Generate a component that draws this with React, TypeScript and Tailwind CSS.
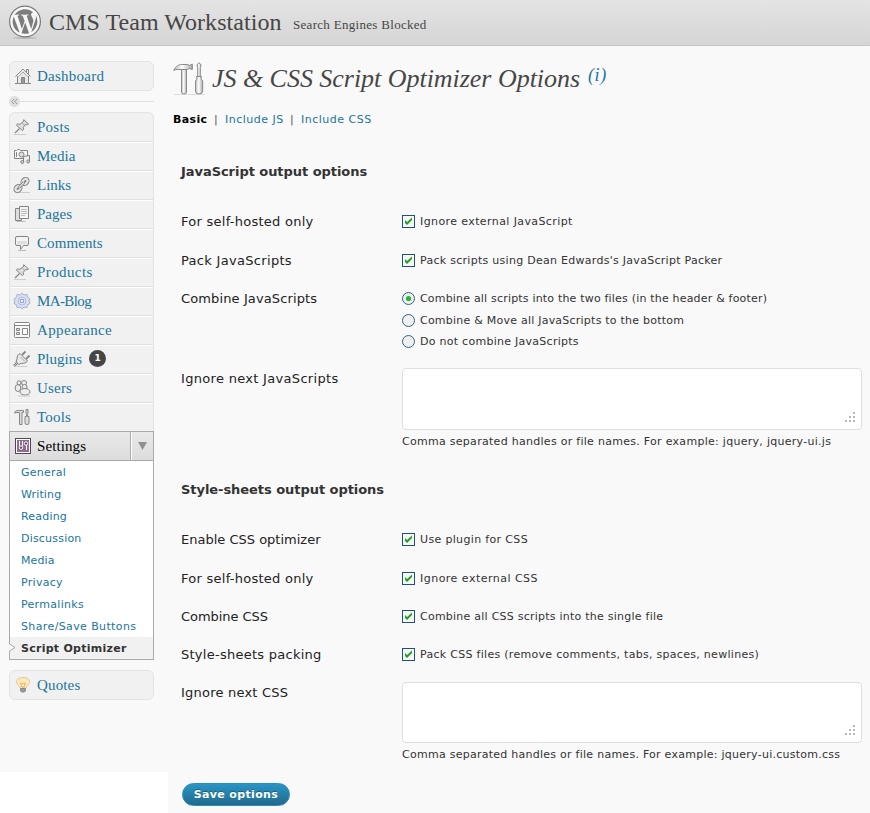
import React from "react";

const SANS = "font-['DejaVu_Sans',sans-serif]";
const SERIF = "font-['Liberation_Serif',serif]";

const G = "#858585";
const L = "#dedede";

function Icon({ children, size = 18 }: { children: React.ReactNode; size?: number }) {
  return (
    <svg width={size} height={size} viewBox="0 0 18 18" fill="none" stroke={G} strokeWidth="1" className="shrink-0">
      {children}
    </svg>
  );
}

const icons: Record<string, React.ReactNode> = {
  home: (
    <Icon>
      <path d="M4 9 9 4.200 14 9v6.500H4z" fill="#e8e8e8" stroke="none" />
      <path d="M1.500 9.500 9 2.200l7.500 7.300M3.500 9v7M14.500 9v7" />
      <path d="M4.500 9.500 9 5l4.500 4.500" stroke="#aaa" />
      <path d="M12.500 5V2.500h2V7M1 16.500h16" />
      <path d="M7.500 16v-5.500h3V16" fill="#999" />
    </Icon>
  ),
  pin: (
    <Icon>
      <path d="M1 16.500h12" stroke="#ccc" />
      <path d="M6.500 10.500 2 15" stroke="#888" strokeWidth="1.200" />
      <path d="M10.700 1.700 15.500 6l-1.700.8-1.500-.2-2 2.800.2 2.200-1.200.9-6-5.500 1.200-1.100 2.300.4L10.500 3.500z" fill={L} />
      <path d="m9.500 5.500 3 2.500" stroke="#aaa" />
    </Icon>
  ),
  media: (
    <Icon>
      <path d="M1.500 3.500h2l1-1h2l1 1h7v8h-13z" fill="#f6f6f6" />
      <circle cx="8.500" cy="7.500" r="2.500" fill={L} />
      <path d="M3.500 5v5" />
      <path d="M10.500 15V9.500l6-1V14" fill="#eee" />
      <circle cx="9.300" cy="15" r="1.500" fill="#ccc" />
      <circle cx="15.200" cy="14.500" r="1.500" fill="#ccc" />
    </Icon>
  ),
  link: (
    <Icon>
      <path d="M4 16.500h13" stroke="#ccc" />
      <g fill="none" strokeWidth="4.200" stroke="#808080">
        <ellipse cx="12" cy="5.500" rx="2" ry="2.800" transform="rotate(45 12 5.500)" />
        <ellipse cx="5" cy="12.500" rx="2" ry="2.800" transform="rotate(45 5 12.500)" />
      </g>
      <g fill="none" strokeWidth="2.200" stroke="#e4e4e4">
        <ellipse cx="12" cy="5.500" rx="2" ry="2.800" transform="rotate(45 12 5.500)" />
        <ellipse cx="5" cy="12.500" rx="2" ry="2.800" transform="rotate(45 5 12.500)" />
      </g>
      <path d="m6 11.500 5-5" strokeWidth="3" />
      <path d="m6 11.500 5-5" stroke="#ddd" strokeWidth="1.200" />
    </Icon>
  ),
  pages: (
    <Icon>
      <path d="M2.500 3.500h6v12h-6z" fill={L} />
      <path d="M6.500 1.500h9v12h-9z" fill="#f4f4f4" />
      <path d="M8 4.500h6M8 6.500h6M8 8.500h6M8 10.500h4M3.500 16.500h9" stroke="#bbb" />
    </Icon>
  ),
  comment: (
    <Icon>
      <path d="M4 2.500h10q1.500 0 1.500 1.500v6q0 1.500-1.500 1.500h-3.500l-3 4v-4H4Q2.500 11.500 2.500 10V4Q2.500 2.500 4 2.500z" fill="#f4f4f4" />
      <path d="M4 7h10v3.500H4z" fill={L} stroke="none" />
      <path d="M5 16.500h8" stroke="#bbb" />
    </Icon>
  ),
  gear: (
    <Icon>
      <path d="M9 1.200 11 3l3-.5.500 2.700L17 7l-1 2 1 2.500-2.500 1.300L14 15.500l-3-.4-2 1.700-2-1.700-3 .4-.5-2.700L1 11.500 2 9 1 7l2.500-1.800L4 2.500 7 3z" fill="#dbe1f0" stroke="#a3b0d2" />
      <circle cx="9" cy="9" r="4" stroke="#b1bddb" />
      <path d="M7.500 7.500h3v3h-3z" fill="#eef" stroke="#98a6cb" />
    </Icon>
  ),
  appearance: (
    <Icon>
      <rect x="1.500" y="1.500" width="15" height="15" rx="1" fill="#f7f7f7" />
      <path d="M2 2h14v1.500H2z" fill="#fff" stroke="none" />
      <path d="M2 4.500h14" />
      <path d="M3.500 7.500h3v2h-3zM3.500 11.500h3v2h-3z" fill={L} />
      <path d="M9.500 7.500h5v6h-5z" fill="#fff" />
    </Icon>
  ),
  plug: (
    <Icon>
      <path d="M3.500 16.500h11" stroke="#ccc" />
      <path d="m9 5 3.500-3.500M13 9l3.500-3.500" strokeWidth="1.800" />
      <path d="M7 3.500 14.500 11l-2.500 2-4 .5-2.500 1L3 12l1-3 .5-3.500z" fill="#e8e8e8" />
      <path d="m7.500 7 4.500 4.500" stroke="#aaa" />
      <path d="M4.500 12.500 1 16" strokeWidth="2.500" />
      <path d="M4.500 12.500 1 16" stroke="#ddd" strokeWidth=".8" />
    </Icon>
  ),
  users: (
    <Icon>
      <g fill="#ededed">
        <ellipse cx="5" cy="9" rx="2.800" ry="3.500" />
        <circle cx="6" cy="3.800" r="2" />
        <ellipse cx="11" cy="4" rx="2.500" ry="2.500" />
        <ellipse cx="11.500" cy="8" rx="2.500" ry="2.500" />
        <ellipse cx="12" cy="12.800" rx="5" ry="3.300" />
      </g>
      <path d="M5 17h12" stroke="#ccc" />
    </Icon>
  ),
  tools: (
    <Icon>
      <path d="M1.500 5c.5-2 2-2.500 4-2.500h5v2H9v12H6.500v-12H4z" fill={L} />
      <path d="M13 1.500h2v3.500l-.5 1.500v2h1.500v6.500q0 1.500-2 1.500t-2-1.500V8.500h1.500v-2L13 5z" fill={L} />
    </Icon>
  ),
  settings: (
    <Icon>
      <rect x="1.500" y="1.500" width="15" height="15" fill="#fff" stroke="#5c3f5c" />
      <rect x="3" y="3" width="12" height="12" fill="#8d6e8c" stroke="none" />
      <path d="M5.500 4v5M8.500 4v5M12.500 8v5" stroke="#fff" />
      <circle cx="7" cy="10.700" r="1.700" fill="#684a68" stroke="#fff" />
      <circle cx="12" cy="6.500" r="1.700" fill="#684a68" stroke="#fff" />
    </Icon>
  ),
  bulb: (
    <Icon>
      <path d="M9 1.500c-4 0-7 2-6.500 4.800C3 9 5.500 9.500 6 12h6c.5-2.500 3-3 3.500-5.700C16 3.500 13 1.500 9 1.500z" fill="#fbe9bd" stroke="#e9c592" />
      <path d="M6.500 7 8 11h2l1.500-4-2.500.8z" fill="#fff3c2" stroke="#e8b45e" />
      <path d="M6.500 12.500h5v2.500l-1.500 1H8l-1.500-1z" fill="#9b9b9b" stroke="#888" />
    </Icon>
  ),
};

function WordPressLogo() {
  return (
    <svg width="34" height="36" viewBox="0 0 34 36" className="shrink-0">
      <ellipse cx="17" cy="33" rx="12" ry="1" fill="#bbb" />
      <circle cx="17" cy="16.500" r="15.400" fill="#f8f8f8" stroke="#777" strokeWidth="1.200" />
      <g transform="translate(2.600 2.100) scale(.235)" fill="#7d7d7d">
        <path d="M8.708 61.260c0 20.802 12.089 38.779 29.619 47.298L13.258 39.872c-2.916 6.536-4.550 13.769-4.550 21.388zM96.740 58.608c0-6.495-2.333-10.993-4.334-14.494-2.664-4.329-5.161-7.995-5.161-12.324 0-4.831 3.664-9.328 8.825-9.328.233 0 .454.029.681.042-9.350-8.566-21.807-13.796-35.489-13.796-18.360 0-34.513 9.420-43.910 23.688 1.233.037 2.395.063 3.382.063 5.497 0 14.006-.667 14.006-.667 2.833-.167 3.167 3.994.337 4.329 0 0-2.847.335-6.015.501L48.200 93.547l11.501-34.493-8.188-22.434c-2.830-.166-5.511-.501-5.511-.501-2.832-.166-2.500-4.496.332-4.329 0 0 8.679.667 13.843.667 5.496 0 14.006-.667 14.006-.667 2.835-.167 3.168 3.994.337 4.329 0 0-2.853.335-6.015.501l18.992 56.494 5.242-17.517c2.272-7.269 4.001-12.490 4.001-16.989zM62.184 65.857l-15.768 45.819c4.708 1.384 9.687 2.141 14.846 2.141 6.120 0 11.989-1.058 17.452-2.979-.141-.225-.269-.464-.374-.724zM107.376 36.046c.226 1.674.354 3.471.354 5.404 0 5.333-.996 11.328-3.996 18.824l-16.053 46.413c15.624-9.111 26.133-26.038 26.133-45.426 0-9.137-2.333-17.729-6.438-25.215z" />
      </g>
    </svg>
  );
}

function HeadingTools() {
  return (
    <svg width="34" height="34" viewBox="0 0 34 34" fill="none" stroke="#8a8a8a" className="shrink-0">
      <defs>
        <linearGradient id="metal">
          <stop stopColor="#bbb" />
          <stop offset=".45" stopColor="#fff" />
          <stop offset="1" stopColor="#a8a8a8" />
        </linearGradient>
      </defs>
      <path d="M1 32.500h31" stroke="#ddd" />
      <path d="M.8 8.500c2-4.500 5-6 8-6h6l1.500 1 3-1.500v5.500l-3-1-2 1H8C5 7.500 3 7 .8 8.500z" fill="url(#metal)" />
      <path d="M8.500 7.500h5v22.500q0 2-2.500 2t-2.500-2z" fill="url(#metal)" />
      <path d="M26 .8q2 1 2 3l-.7 2v9h-2.600v-9l-.7-2q0-2 2-3z" fill="url(#metal)" />
      <path d="M23.500 14.500h5l-.5 2.500 1.700 2v10q0 3-3.700 3t-3.500-3V19l1.500-2z" fill="url(#metal)" />
    </svg>
  );
}

const menu: [string, string, string][] = [
  ["pin", "Posts", "tracking-[0.25px]"],
  ["media", "Media", "tracking-[0px]"],
  ["link", "Links", "tracking-[0px]"],
  ["pages", "Pages", "tracking-[0px]"],
  ["comment", "Comments", "tracking-[0.1px]"],
  ["pin", "Products", "tracking-[0.4px]"],
  ["gear", "MA-Blog", "tracking-[-0.6px]"],
  ["appearance", "Appearance", "tracking-[0.35px]"],
  ["plug", "Plugins", "tracking-[0px]"],
  ["users", "Users", "tracking-[0.2px]"],
  ["tools", "Tools", "tracking-[0.2px]"],
];

const submenu: [string, string][] = [
  ["General", "tracking-[0.25px]"],
  ["Writing", "tracking-[0.15px]"],
  ["Reading", "tracking-[0.2px]"],
  ["Discussion", "tracking-[0.2px]"],
  ["Media", "tracking-[0.1px]"],
  ["Privacy", "tracking-[0.3px]"],
  ["Permalinks", "tracking-[0.3px]"],
  ["Share/Save Buttons", "tracking-[0.38px]"],
];

function MenuText({ children, className = "" }: { children: React.ReactNode; className?: string }) {
  return <span className={`${SERIF} ml-[5px] text-[15px] leading-[18px] ${className}`}>{children}</span>;
}

function Sidebar() {
  return (
    <nav className="w-[168px] bg-[#f9f9f9] pl-[9px] text-[#21759b]">
      <div className="h-[726px] w-[145px] pt-[15px]">
        <div className="flex h-[30px] items-center rounded-md border border-[#e3e3e3] bg-[#f1f1f1] pl-1">
          {icons.home}
          <MenuText className="tracking-[0.25px]">Dashboard</MenuText>
        </div>
        <div className="flex h-[21px] items-center">
          <svg width="11" height="11" viewBox="0 0 11 11" fill="none" stroke="#999">
            <circle cx="5.500" cy="5.500" r="5.500" fill="#dfdfdf" stroke="none" />
            <path d="M5 3 2.800 5.500 5 8M8 3 5.800 5.500 8 8" />
          </svg>
          <div className="h-px flex-1 bg-[#dfdfdf]" />
        </div>
        <div className="rounded-t-md border border-b-0 border-[#e3e3e3] bg-[#f1f1f1]">
          {menu.map(([icon, label, track], i) => (
            <div
              key={label}
              className={`flex items-center pl-[3px] ${i === 10 ? "h-[28px]" : "h-[29px] border-b border-[#dfdfdf]"} ${i > 0 ? "border-t border-t-white pb-[2px]" : ""}`}
            >
              {icons[icon]}
              <MenuText className={`pl-px ${track}`}>{label}</MenuText>
              {label === "Plugins" && (
                <span className={`${SANS} ml-[7px] flex size-[17px] items-center justify-center rounded-full bg-[#464646] text-[9px] font-bold text-white`}>1</span>
              )}
            </div>
          ))}
        </div>
        <div className="flex h-[30px] border border-[#aaa] bg-linear-to-b from-[#e9e9e9] to-[#dcdcdc] text-black">
          <div className="flex flex-1 items-center border-r border-[#aaa] pl-1">
            {icons.settings}
            <MenuText className="tracking-[0.1px]">Settings</MenuText>
          </div>
          <div className="flex w-[22px] items-center justify-center border-l border-white">
            <svg width="9" height="8" viewBox="0 0 9 8">
              <path d="M0 0h9L4.500 8z" fill="#8f8f8f" />
            </svg>
          </div>
        </div>
        <div className={`${SANS} border border-t-0 border-[#aaa] bg-white text-[11px] leading-[24px]`}>
          {submenu.map(([s, track]) => (
            <div key={s} className={`h-[22px] whitespace-nowrap pl-[11px] ${track}`}>{s}</div>
          ))}
          <div className="-ml-px flex h-[22px] items-center bg-[#f1f1f1] font-bold text-[#333]">
            <svg width="7" height="22" viewBox="0 0 7 22" fill="#f9f9f9" stroke="#aaa" className="shrink-0">
              <path d="M.5 0v7L6 10.500.5 14v8" />
            </svg>
            <span className="ml-[5px] whitespace-nowrap pt-px tracking-[0.27px]">Script Optimizer</span>
          </div>
        </div>
        <div className="mt-[10px] flex h-[30px] items-center rounded-md border border-[#e3e3e3] bg-[#f1f1f1] pl-1">
          {icons.bulb}
          <MenuText className="tracking-[0.15px]">Quotes</MenuText>
        </div>
      </div>
    </nav>
  );
}

function Check({ children, track }: { children: React.ReactNode; track: string }) {
  return (
    <div className="flex items-center gap-[5px] text-[11px]">
      <svg width="13" height="13" viewBox="0 0 13 13" className="shrink-0">
        <rect x=".5" y=".5" width="12" height="12" fill="#f7f7f5" stroke="#1c5180" />
        <path d="M3 5v3l2 2 5-5V2.500L5 7z" fill="#21a121" />
      </svg>
      <span className={`whitespace-nowrap pt-[2px] ${track}`}>{children}</span>
    </div>
  );
}

function Radio({ children, on, track }: { children: React.ReactNode; on?: boolean; track: string }) {
  return (
    <div className="flex h-[17px] items-center gap-[5px] text-[11px]">
      <svg width="13" height="13" viewBox="0 0 13 13" className="shrink-0">
        <circle cx="6.500" cy="6.500" r="6" fill="#f0f0ee" stroke="#2f6290" />
        {on && <circle cx="6.500" cy="6.500" r="2.600" fill="#2eb52e" />}
      </svg>
      <span className={`whitespace-nowrap pt-[2px] ${track}`}>{children}</span>
    </div>
  );
}

function Row({ label, h, track, children }: { label: string; h: string; track: string; children: React.ReactNode }) {
  return (
    <div className={`flex items-center ${h}`}>
      <div className={`w-[221px] shrink-0 text-[13px] text-[#222] ${track}`}>{label}</div>
      {children}
    </div>
  );
}

function Area({ label, hint, h, track, hintTrack }: { label: string; hint: string; h: string; track: string; hintTrack: string }) {
  return (
    <div className="flex">
      <div className={`w-[221px] shrink-0 text-[13px] leading-[40px] text-[#222] ${track}`}>{label}</div>
      <div className="pt-[9px]">
        <div className={`flex w-[460px] items-end justify-end rounded border border-[#dfdfdf] bg-white px-[5px] py-[6px] ${h}`}>
          <svg width="11" height="11" viewBox="0 0 11 11" fill="#b5b5b5">
            <path d="M8 0h2v2H8zM4 4h2v2H4zM8 4h2v2H8zM0 8h2v2H0zM4 8h2v2H4zM8 8h2v2H8z" />
          </svg>
        </div>
        <div className={`h-[22px] whitespace-nowrap text-[11px] leading-[24px] ${hintTrack}`}>{hint}</div>
      </div>
    </div>
  );
}

export default function App() {
  return (
    <div className={`h-[813px] w-[870px] overflow-hidden bg-white text-[#333] ${SANS}`}>
      <header className={`flex h-[46px] border-b border-[#c6c6c6] bg-linear-to-b from-[#e4e4e4] to-[#d5d5d5] pt-[5px] pl-[8px] text-[#464646] ${SERIF}`}>
        <WordPressLogo />
        <h1 className="ml-[7px] w-[244px] whitespace-nowrap text-[24px] leading-[34px] tracking-[0.05px]">CMS Team Workstation</h1>
        <span className="whitespace-nowrap pt-[3px] text-[13px] leading-[34px] tracking-[0.3px]">Search Engines Blocked</span>
      </header>
      <div className="flex h-[767px] items-start">
        <Sidebar />
        <main className="h-[767px] w-[702px] bg-[#f9f9f9] pl-[5px]">
          <div className="flex h-[61px] pt-[16px]">
            <HeadingTools />
            <h2 className={`ml-[5px] w-[376px] whitespace-nowrap text-[26px] leading-[34px] tracking-[-0.03px] italic text-[#464646] ${SERIF}`}>
              JS &amp; CSS Script Optimizer Options
            </h2>
            <span className={`text-[18px] leading-[26px] tracking-[0.6px] italic text-[#21759b] ${SERIF}`}>(i)</span>
          </div>
          <div className="flex h-[24px] items-center whitespace-nowrap pt-[2px] text-[11px] text-[#21759b]">
            <b className="w-[41px] tracking-[0.35px] text-black">Basic</b>
            <span className="w-[11px] text-[#555]">|</span>
            <span className="w-[65px] tracking-[0.5px]">Include JS</span>
            <span className="w-[11px] text-[#555]">|</span>
            <span className="tracking-[0.5px]">Include CSS</span>
          </div>
          <div className="pl-2">
            <h3 className="mt-[21px] mb-[11px] h-[39px] text-[13px] leading-[39px] font-bold tracking-[-0.05px]">JavaScript output options</h3>
            <Row label="For self-hosted only" h="h-[39px]" track="tracking-[0.26px]">
              <Check track="tracking-[0.4px]">Ignore external JavaScript</Check>
            </Row>
            <Row label="Pack JavaScripts" h="h-[38px]" track="tracking-[0.31px] pt-[2px]">
              <Check track="tracking-[0.28px]">Pack scripts using Dean Edwards's JavaScript Packer</Check>
            </Row>
            <div className="flex h-[80px] items-start">
              <div className="w-[221px] text-[13px] leading-[40px] tracking-[0.12px] text-[#222]">Combine JavaScripts</div>
              <div className="flex flex-col gap-[4.500px] pt-[11px]">
                <Radio on track="tracking-[0.19px]">Combine all scripts into the two files (in the header &amp; footer)</Radio>
                <Radio track="tracking-[0.23px]">Combine &amp; Move all JavaScripts to the bottom</Radio>
                <Radio track="tracking-[0.27px]">Do not combine JavaScripts</Radio>
              </div>
            </div>
            <Area label="Ignore next JavaScripts" h="h-[62px]" track="tracking-[0.31px]" hintTrack="tracking-[0.285px]" hint="Comma separated handles or file names. For example: jquery, jquery-ui.js" />
            <h3 className="mt-[18px] mb-[11px] h-[39px] text-[13px] leading-[39px] font-bold tracking-[-0.05px]">Style-sheets output options</h3>
            <Row label="Enable CSS optimizer" h="h-[39px]" track="">
              <Check track="tracking-[0.34px]">Use plugin for CSS</Check>
            </Row>
            <Row label="For self-hosted only" h="h-[38px]" track="tracking-[0.26px] pt-[2px]">
              <Check track="tracking-[0.48px]">Ignore external CSS</Check>
            </Row>
            <Row label="Combine CSS" h="h-[38px]" track="tracking-[-0.05px] pt-[2px]">
              <Check track="tracking-[0.24px]">Combine all CSS scripts into the single file</Check>
            </Row>
            <Row label="Style-sheets packing" h="h-[38px]" track="tracking-[0.26px] pt-[2px]">
              <Check track="tracking-[0.29px]">Pack CSS files (remove comments, tabs, spaces, newlines)</Check>
            </Row>
            <Area label="Ignore next CSS" h="h-[61px]" track="tracking-[0.22px]" hintTrack="tracking-[0.26px]" hint="Comma separated handles or file names. For example: jquery-ui.custom.css" />
            <button className="mt-[18px] ml-px flex h-[23px] w-[108px] items-center justify-center rounded-full border border-[#298cba] bg-linear-to-b from-[#2a95c5] to-[#21698c] pt-px text-[11px] font-bold tracking-[0.35px] whitespace-nowrap text-white [text-shadow:0_-1px_0_rgba(0,0,0,0.3)]">
              Save options
            </button>
          </div>
        </main>
      </div>
    </div>
  );
}
